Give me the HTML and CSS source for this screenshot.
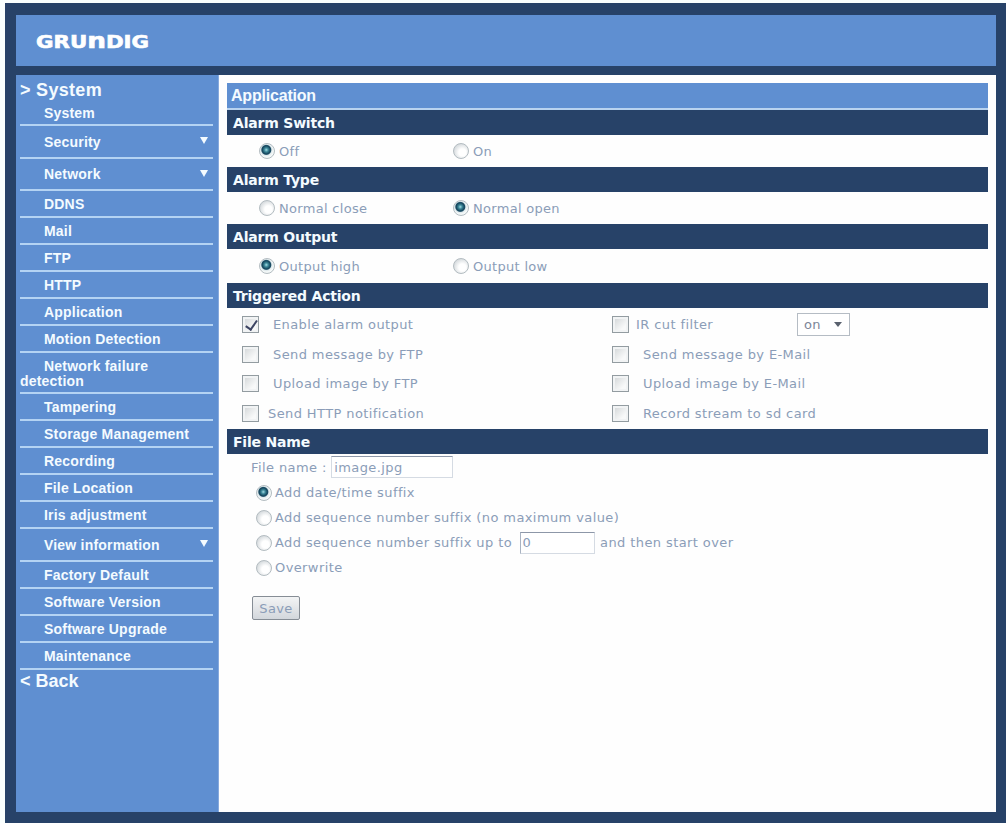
FILE: index.html
```
<!DOCTYPE html>
<html lang="en">
<head>
  <meta charset="UTF-8">
  <title>Application</title>
  <link rel="stylesheet" href="styles.css">
</head>
<body>

<div class="frame">
  <header class="header">
    <svg class="logo" width="120" height="36" viewBox="0 0 120 36">
      <text x="0" y="25" textLength="113" lengthAdjust="spacingAndGlyphs">GRU<tspan class="tall-n">n</tspan>DIG</text>
    </svg>
  </header>

  <div class="body">
    <nav class="sidebar">
      <a class="menu-title">&gt; System</a>
      <ul class="menu">
        <li class="first"><span>System</span></li>
        <li class="has-sub"><span>Security</span></li>
        <li class="has-sub"><span>Network</span></li>
        <li><span>DDNS</span></li>
        <li><span>Mail</span></li>
        <li><span>FTP</span></li>
        <li><span>HTTP</span></li>
        <li><span>Application</span></li>
        <li><span>Motion Detection</span></li>
        <li class="two-lines"><span>Network failure detection</span></li>
        <li><span>Tampering</span></li>
        <li><span>Storage Management</span></li>
        <li><span>Recording</span></li>
        <li><span>File Location</span></li>
        <li><span>Iris adjustment</span></li>
        <li class="has-sub"><span>View information</span></li>
        <li><span>Factory Default</span></li>
        <li><span>Software Version</span></li>
        <li><span>Software Upgrade</span></li>
        <li><span>Maintenance</span></li>
      </ul>
      <a class="back">&lt; Back</a>
    </nav>

    <main class="content">
      <h1>Application</h1>

      <h2>Alarm Switch</h2>
      <div class="radio-row">
        <label><input type="radio" name="switch" checked>Off</label>
        <label><input type="radio" name="switch">On</label>
      </div>

      <h2>Alarm Type</h2>
      <div class="radio-row">
        <label><input type="radio" name="type">Normal close</label>
        <label><input type="radio" name="type" checked>Normal open</label>
      </div>

      <h2>Alarm Output</h2>
      <div class="radio-row tall">
        <label><input type="radio" name="output" checked>Output high</label>
        <label><input type="radio" name="output">Output low</label>
      </div>

      <h2>Triggered Action</h2>
      <div class="actions">
        <label><input type="checkbox" checked>Enable alarm output</label>
        <div class="filter">
          <label class="near"><input type="checkbox">IR cut filter</label>
          <div class="select">on</div>
        </div>
        <label><input type="checkbox">Send message by FTP</label>
        <label><input type="checkbox">Send message by E-Mail</label>
        <label><input type="checkbox">Upload image by FTP</label>
        <label><input type="checkbox">Upload image by E-Mail</label>
        <label class="near"><input type="checkbox">Send HTTP notification</label>
        <label><input type="checkbox">Record stream to sd card</label>
      </div>

      <h2>File Name</h2>
      <div class="file">
        <div class="file-name">File name : <input type="text" class="name" value="image.jpg"></div>
        <label><input type="radio" name="suffix" checked>Add date/time suffix</label>
        <label><input type="radio" name="suffix">Add sequence number suffix (no maximum value)</label>
        <label><input type="radio" name="suffix">Add sequence number suffix up to <input type="text" class="limit" value="0"> and then start over</label>
        <label><input type="radio" name="suffix">Overwrite</label>
        <button class="save">Save</button>
      </div>
    </main>
  </div>
</div>

</body>
</html>
```
FILE: styles.css
```
* {
  box-sizing: border-box;
}

body {
  margin: 0;
  padding: 3px 0 0 5px;
  height: 823px;
  background: #fafffe;
  font-family: "DejaVu Sans", Verdana, sans-serif;
  font-size: 13px;
  color: #8b9db8;
}

.frame {
  height: 820px;
  padding: 12px 10px 11px 11px;
  background: #274268;
}

.header {
  height: 51px;
  margin-bottom: 9px;
  padding: 8px 20px;
  background: #5f8fd1;
}

.logo {
  display: block;
}

.logo text {
  font-size: 17px;
  font-weight: bold;
  fill: #fff;
  stroke: #fff;
  stroke-width: 0.6px;
}

.logo .tall-n {
  font-size: 21px;
}

.body {
  display: flex;
  height: 737px;
}

/* sidebar */

.sidebar {
  width: 203px;
  padding: 5px 5px 0 4px;
  border-right: 1px solid #86a9dd;
  background: #5f8fd1;
  color: #f4fbff;
  font-family: "Liberation Sans", Arial, sans-serif;
  font-weight: bold;
}

.menu-title,
.back {
  display: block;
  height: 21px;
  font-size: 18px;
  line-height: 21px;
  letter-spacing: 0.3px;
}

.back {
  padding-top: 1px;
  letter-spacing: 0;
}

.menu {
  margin: 0;
  padding: 0;
  list-style: none;
  font-size: 14px;
  letter-spacing: 0.2px;
}

.menu li {
  display: flex;
  align-items: center;
  height: 27px;
  padding-top: 2px;
  border-bottom: 2px solid #b4d3f3;
  line-height: 15px;
}

.menu span {
  flex: 1;
  text-indent: 24px;
}

.menu .first {
  height: 25px;
}

.menu .has-sub {
  height: 32.5px;
}

.menu .has-sub::after {
  content: "";
  margin: 0 5px 3px 0;
  border: 4.5px solid transparent;
  border-top: 7px solid #f4fbff;
  border-bottom: 0;
}

.menu .two-lines {
  height: 41px;
  padding-right: 30px;
}

/* content */

.content {
  flex: 1;
  padding: 8px 8px 0;
  background: #fefefe;
}

h1,
h2 {
  margin: 0;
  height: 25px;
  padding-left: 6px;
  font-size: 14px;
  line-height: 27px;
  letter-spacing: -0.2px;
  background: #274268;
  color: #f4fbff;
}

h1 {
  padding-left: 4px;
  height: 27px;
  font-family: "Liberation Sans", Arial, sans-serif;
  font-size: 16px;
  line-height: 26px;
  background: #5f8fd1;
  border-bottom: 2px solid #b9d3ef;
}

label {
  display: flex;
  align-items: center;
  white-space: pre;
}

input,
button {
  margin: 0;
  font: inherit;
  color: inherit;
  letter-spacing: inherit;
}

input[type="radio"] {
  appearance: none;
  width: 16px;
  height: 16px;
  margin-right: 4px;
  border: 1px solid #b3bcc1;
  border-radius: 50%;
  background: radial-gradient(circle at 60% 60%, #fff 30%, #d5dadd 75%);
}

input[type="radio"]:checked {
  background: radial-gradient(circle at 45% 42%, #a5dbe4 0, #3b8798 2px, #17475e 4px, #1f5068 4.5px, #dfe9ec 5.5px, #f4f8f8 7px);
}

input[type="checkbox"] {
  appearance: none;
  display: flex;
  width: 17px;
  height: 17px;
  margin-right: 14px;
  border: 1px solid #939ca1;
  background: linear-gradient(135deg, #cfd3d5, #f8f9f9 70%);
  box-shadow: inset 0 0 0 2px #f1f3f4;
}

/* tick mark */
input[type="checkbox"]:checked::before {
  content: "";
  width: 5px;
  height: 10px;
  margin: 1px 0 0 5px;
  border: solid #3d4563;
  border-width: 0 2px 2px 0;
  transform: rotate(35deg);
}

.near input[type="checkbox"] {
  margin-right: 9px;
}

.radio-row {
  display: flex;
  height: 32px;
  padding-left: 32px;
  letter-spacing: 0.3px;
}

.radio-row label {
  width: 194px;
}

.radio-row.tall {
  height: 34px;
}

.actions {
  display: grid;
  grid-template-columns: 370px 1fr;
  grid-auto-rows: 29.5px;
  height: 121px;
  padding: 2px 0 0 15px;
  letter-spacing: 0.4px;
}

.filter {
  display: flex;
  align-items: center;
}

.filter .near {
  width: 185px;
  letter-spacing: 0.4px;
}

.filter .near input {
  margin-right: 7px;
}

.select {
  display: flex;
  align-items: center;
  justify-content: space-between;
  width: 53px;
  height: 23px;
  padding: 0 7px 0 6px;
  border: 1px solid #b5bcc4;
  color: #7c8698;
  background: #fff;
}

.select::after {
  content: "";
  border: 4px solid transparent;
  border-top: 5px solid #59616e;
  border-bottom: 0;
}

.file {
  padding-left: 29px;
  letter-spacing: 0.4px;
}

.file label {
  height: 25px;
}

.file label input[type="radio"] {
  margin-right: 3px;
}

.file-name {
  display: flex;
  align-items: center;
  height: 26px;
  margin: 0 0 0 -5px;
  white-space: pre;
}

input[type="text"] {
  height: 22px;
  padding: 0 2px;
  border: 1px solid #d5dbe3;
  border-top-color: #8d97a8;
  background: #fff;
}

.name {
  width: 122px;
}

input.limit {
  width: 75px;
  margin: 0 1px 0 3px;
  border-left-color: #a9b3c2;
}

.save {
  display: block;
  width: 48px;
  height: 24px;
  margin: 16px 0 0 -4px;
  padding: 0;
  border: 1px solid #868d95;
  border-radius: 2px;
  background: linear-gradient(#f3f4f5, #d3d7dc);
}
```
